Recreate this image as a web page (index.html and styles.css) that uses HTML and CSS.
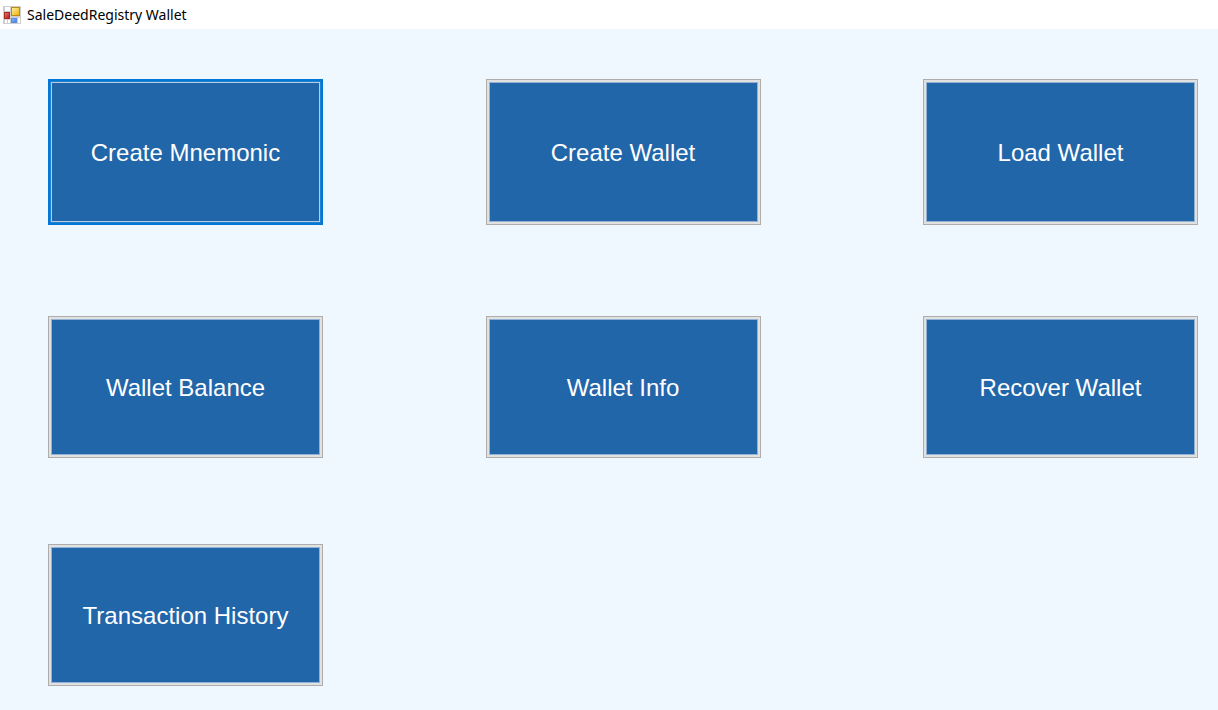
FILE: index.html
```html
<!DOCTYPE html>
<html lang="en">
<head>
<meta charset="utf-8">
<meta name="viewport" content="width=device-width, initial-scale=1">
<title>SaleDeedRegistry Wallet</title>
<link rel="stylesheet" href="styles.css">
</head>
<body>
<header class="titlebar">
  <svg class="app-icon" viewBox="0 0 18 18" aria-hidden="true">
    <defs>
      <linearGradient id="gold" x2="1" y2="1"><stop offset="0" stop-color="#fff0a0"/><stop offset="1" stop-color="#eeb00c"/></linearGradient>
      <linearGradient id="red" x2="1" y2="1"><stop offset="0" stop-color="#e58079"/><stop offset="1" stop-color="#b01410"/></linearGradient>
      <linearGradient id="blue" x2="1" y2="1"><stop offset="0" stop-color="#8dbcff"/><stop offset="1" stop-color="#3d78dc"/></linearGradient>
    </defs>
    <rect width="18" height="18" fill="#cecece"/>
    <path d="M2 1h5v4H2zM2 14h2v3H2zM5 14h2v3H5zM15 12h2v5h-2z" fill="#fff"/>
    <rect x="8.500" y="1.500" width="8" height="8" fill="url(#gold)" stroke="#bd8a14"/>
    <rect x="1.500" y="6.500" width="5" height="6" fill="url(#red)" stroke="#a92a25"/>
    <rect x="8.500" y="12.500" width="5" height="4" fill="url(#blue)" stroke="#5b8cdd"/>
  </svg>
  <h1 class="title">SaleDeedRegistry Wallet</h1>
</header>
<main class="actions">
  <button type="button" class="action action-tall action-default">Create Mnemonic</button>
  <button type="button" class="action action-tall">Create Wallet</button>
  <button type="button" class="action action-tall">Load Wallet</button>
  <button type="button" class="action">Wallet Balance</button>
  <button type="button" class="action">Wallet Info</button>
  <button type="button" class="action">Recover Wallet</button>
  <button type="button" class="action">Transaction History</button>
</main>
</body>
</html>
```
FILE: styles.css
```css
* {
  box-sizing: border-box;
}

body {
  margin: 0;
  min-height: 100vh;
  background: #eff7ff;
  font-family: "Liberation Sans", Arial, sans-serif;
}

.titlebar {
  display: flex;
  align-items: center;
  gap: 6px;
  height: 29px;
  padding: 0 3px;
  background: #fff;
}

.app-icon {
  width: 18px;
  height: 18px;
}

.title {
  margin: 0;
  color: #000;
  font: 400 14px/20px "Noto Sans", "Open Sans", sans-serif;
}

.actions {
  display: grid;
  grid-template-columns: repeat(3, 275px);
  grid-template-rows: 151px;
  justify-content: space-between;
  align-items: start;
  row-gap: 86px;
  padding: 50px 20px 24px 48px;
}

.action {
  min-height: 142px;
  padding: 1px 8px 0;
  border: 1px solid #adadad;
  background: #2266aa;
  box-shadow: inset 0 0 0 2px #e1e1e1, inset 0 0 0 3px #90b2d4;
  color: #fff;
  font: 400 24px/28px "Liberation Sans", Arial, sans-serif;
}

.action-tall {
  min-height: 146px;
}

.action-default {
  border: 2px solid #0078d7;
  box-shadow: inset 0 0 0 1px #2381d2, inset 0 0 0 2px #b9cde1;
}
```
